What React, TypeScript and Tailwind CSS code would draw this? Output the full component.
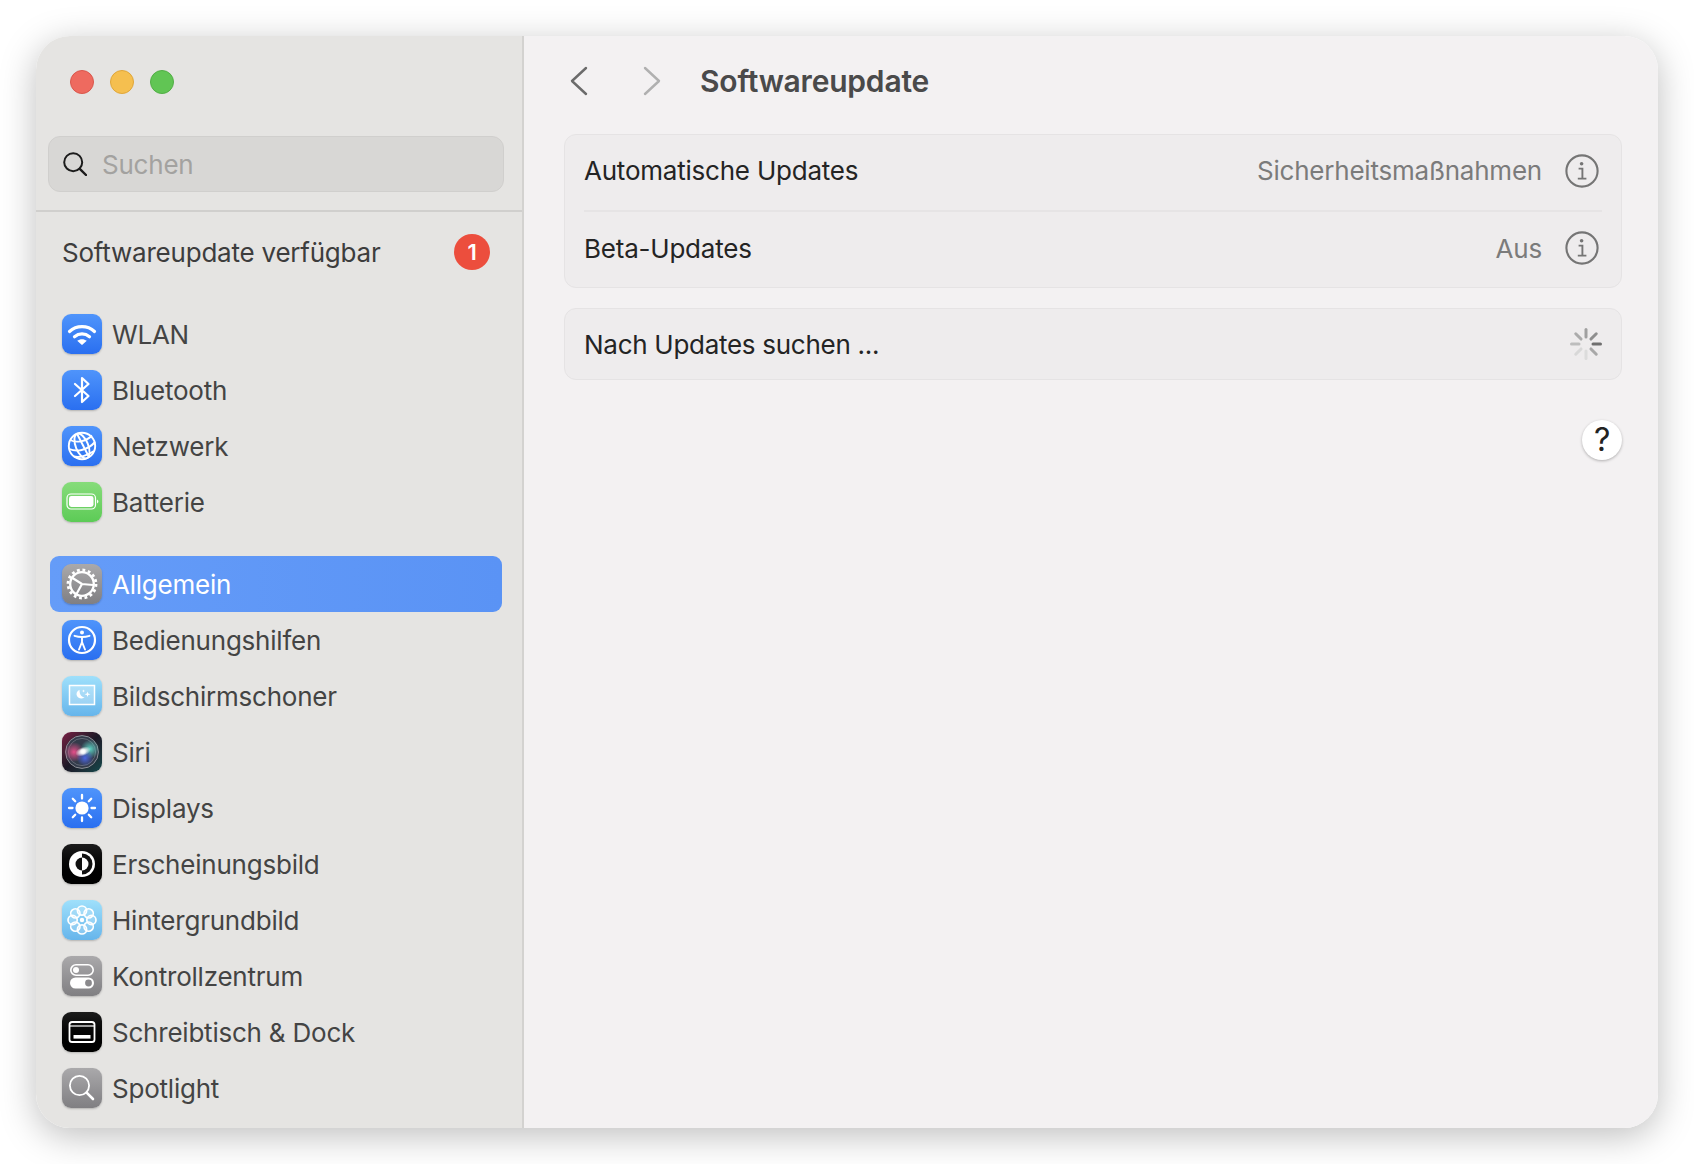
import React from 'react';

const Tile = ({ className, children }: { className: string; children: React.ReactNode }) => (
    <div className={`w-10 h-10 shrink-0 rounded-[9px] shadow-[0_1px_2px_rgba(0,0,0,0.22)] ${className}`}>
        <svg viewBox="0 0 40 40" className="w-10 h-10">{children}</svg>
    </div>
);

const blue = 'bg-gradient-to-b from-[#4f94fb] to-[#2a6ff0]';
const sky = 'bg-gradient-to-b from-[#9fe0fb] to-[#66b5eb]';
const grey = 'bg-gradient-to-b from-[#aaa9ab] to-[#807f82]';

const WlanIcon = () => (
    <Tile className={blue}>
        <g fill="none" stroke="#fff" strokeWidth="3.2" strokeLinecap="round">
            <path d="M7.5 17.5C14.5 11 25.5 11 32.5 17.5" />
            <path d="M12.5 22.8C17 19 23 19 27.5 22.8" />
        </g>
        <path d="M15.2 26.8C18 24.7 22 24.7 24.8 26.8L20.6 30.6C20.2 31 19.8 31 19.4 30.6Z" fill="#fff" />
    </Tile>
);

const BluetoothIcon = () => (
    <Tile className={blue}>
        <path d="M13 14L26.5 26L20 32V8L26.5 14L13 26" fill="none" stroke="#fff" strokeWidth="2.2" strokeLinecap="round" strokeLinejoin="round" />
    </Tile>
);

const GlobeIcon = () => (
    <Tile className={blue}>
        <g fill="none" stroke="#fff" strokeWidth="1.9">
            <circle cx="20" cy="20" r="13.2" />
            <ellipse cx="20" cy="20" rx="6.2" ry="13.2" transform="rotate(-22 20 20)" />
            <path d="M8.5 14C13 17 24 16 30 9.5" />
            <path d="M7.3 23C14 26 25 25 33 16" />
            <path d="M12 30.5C17 32 25 30 32 25" />
            <path d="M15 7.8L27 31" />
        </g>
    </Tile>
);

const BatteryIcon = () => (
    <Tile className="bg-gradient-to-b from-[#86dc7a] to-[#5ccb56]">
        <rect x="5" y="12" width="28.5" height="15" rx="4" fill="none" stroke="#fff" strokeWidth="1.2" />
        <rect x="7" y="14" width="24.5" height="11" rx="2.4" fill="#fff" />
        <path d="M35 17.5C36 18 36.4 18.8 36.4 19.5C36.4 20.2 36 21 35 21.5Z" fill="#fff" />
    </Tile>
);

const GearIcon = () => (
    <Tile className={grey}>
        <g fill="none" stroke="#fff">
            <circle cx="20" cy="20" r="14" strokeWidth="2.8" strokeDasharray="2.8 2.7" />
            <circle cx="20" cy="20" r="11.8" strokeWidth="2.3" />
            <path d="M20 20L10.5 14M20 20L31 21M20 20L14.5 30" strokeWidth="2.2" />
        </g>
    </Tile>
);

const AccessIcon = () => (
    <Tile className={blue}>
        <circle cx="20" cy="20" r="13" fill="none" stroke="#fff" strokeWidth="2.2" />
        <circle cx="20" cy="12.6" r="2" fill="#fff" />
        <path d="M12.5 15.8C17 17.2 23 17.2 27.5 15.8M20 17V22M20 22L17 29.5M20 22L23 29.5" fill="none" stroke="#fff" strokeWidth="1.9" strokeLinecap="round" />
    </Tile>
);

const SaverIcon = () => (
    <Tile className={sky}>
        <rect x="7.5" y="9.5" width="25" height="19" fill="#ffffff" fillOpacity="0.28" stroke="#fff" strokeWidth="1.5" />
        <path d="M17.5 13.8C14.8 15 13.8 17.6 15 20C16.2 22.4 19.6 23.2 22.6 21.4C20 21.2 17.4 19.2 17.5 13.8Z" fill="#fff" />
        <path d="M25.5 15.5L26.2 17.6L28.5 18.3L26.2 19L25.5 21.1L24.8 19L22.5 18.3L24.8 17.6Z" fill="#fff" />
        <path d="M21.5 13.5L21.9 14.6L23 15L21.9 15.4L21.5 16.5L21.1 15.4L20 15L21.1 14.6Z" fill="#fff" />
    </Tile>
);

const SiriIcon = () => (
    <div className="w-10 h-10 shrink-0 rounded-[9px] shadow-[0_1px_2px_rgba(0,0,0,0.22)] bg-gradient-to-br from-[#7a1c44] via-[#1b1826] to-[#0f4a4c]">
        <svg viewBox="0 0 40 40" className="w-10 h-10">
            <defs>
                <radialGradient id="siriPink" cx="0.5" cy="0.5" r="0.5">
                    <stop offset="0" stopColor="#ee4f8c" stopOpacity="0.95" />
                    <stop offset="1" stopColor="#ee4f8c" stopOpacity="0" />
                </radialGradient>
                <radialGradient id="siriTeal" cx="0.5" cy="0.5" r="0.5">
                    <stop offset="0" stopColor="#5fd8c8" stopOpacity="0.95" />
                    <stop offset="1" stopColor="#5fd8c8" stopOpacity="0" />
                </radialGradient>
                <radialGradient id="siriBlue" cx="0.5" cy="0.5" r="0.5">
                    <stop offset="0" stopColor="#4d68e8" stopOpacity="0.95" />
                    <stop offset="1" stopColor="#4d68e8" stopOpacity="0" />
                </radialGradient>
                <radialGradient id="siriWhite" cx="0.5" cy="0.5" r="0.5">
                    <stop offset="0" stopColor="#fff" />
                    <stop offset="0.5" stopColor="#fff" stopOpacity="0.7" />
                    <stop offset="1" stopColor="#fff" stopOpacity="0" />
                </radialGradient>
            </defs>
            <circle cx="20" cy="20" r="16.4" fill="#333b4a" stroke="#8d9098" strokeWidth="1" />
            <circle cx="20" cy="20" r="13.6" fill="none" stroke="#6d7480" strokeWidth="0.8" />
            <circle cx="12" cy="20" r="10" fill="url(#siriPink)" />
            <circle cx="28" cy="17" r="9.5" fill="url(#siriTeal)" />
            <circle cx="23" cy="26" r="8.5" fill="url(#siriBlue)" />
            <ellipse cx="21" cy="19.5" rx="8" ry="4.5" fill="url(#siriWhite)" transform="rotate(-20 21 19.5)" />
            <circle cx="21" cy="19.5" r="3.6" fill="url(#siriWhite)" />
        </svg>
    </div>
);

const SunIcon = () => (
    <Tile className={blue}>
        <circle cx="20" cy="20" r="6.6" fill="#fff" />
        <path d="M20 7V10.5M20 29.5V33M7 20H10.5M29.5 20H33M10.8 10.8L13.2 13.2M26.8 26.8L29.2 29.2M10.8 29.2L13.2 26.8M26.8 13.2L29.2 10.8" stroke="#fff" strokeWidth="2.3" strokeLinecap="round" />
    </Tile>
);

const AppearanceIcon = () => (
    <Tile className="bg-gradient-to-b from-[#1c1c1c] to-[#000000]">
        <circle cx="20" cy="20" r="13" fill="#fff" />
        <path d="M20 9.5A10.5 10.5 0 0 1 20 30.5Z" fill="#111" />
        <path d="M20 13.5A6.5 6.5 0 0 1 20 26.5Z" fill="#fff" />
        <path d="M20 13.5A6.5 6.5 0 0 0 20 26.5Z" fill="#111" />
    </Tile>
);

const FlowerIcon = () => (
    <Tile className={sky}>
        <g fill="#ffffff" fillOpacity="0.18" stroke="#fff" strokeWidth="1.7">
            {[0, 45, 90, 135, 180, 225, 270, 315].map((a) => (
                <circle key={a} cx="20" cy="10.6" r="4.6" transform={`rotate(${a} 20 20)`} />
            ))}
        </g>
        <circle cx="20" cy="20" r="2.2" fill="#fff" />
    </Tile>
);

const ControlIcon = () => (
    <Tile className={grey}>
        <rect x="8.8" y="8.8" width="22.4" height="10.4" rx="5.2" fill="none" stroke="#fff" strokeWidth="1.6" />
        <circle cx="14" cy="14" r="3" fill="#fff" />
        <rect x="8" y="21.5" width="24" height="11" rx="5.5" fill="#fff" />
        <circle cx="26.5" cy="27" r="3.4" fill="#8a898c" />
    </Tile>
);

const DockIcon = () => (
    <Tile className="bg-gradient-to-b from-[#1c1c1c] to-[#000000]">
        <rect x="7.5" y="10" width="25" height="20" rx="2.6" fill="none" stroke="#fff" strokeWidth="1.8" />
        <path d="M8 14H32" stroke="#fff" strokeWidth="1.2" />
        <rect x="11.5" y="23" width="17" height="3.6" fill="#fff" />
    </Tile>
);

const SpotlightIcon = () => (
    <Tile className={grey}>
        <circle cx="17.5" cy="17.5" r="9.6" fill="none" stroke="#fff" strokeWidth="1.8" />
        <path d="M24.6 24.6L31 31" stroke="#fff" strokeWidth="2.6" strokeLinecap="round" />
    </Tile>
);

const InfoIcon = () => (
    <svg viewBox="0 0 34 34" className="w-[34px] h-[34px] shrink-0 mr-[3px] mb-[3px]">
        <circle cx="17" cy="17" r="15.6" fill="none" stroke="#757575" strokeWidth="2.1" />
        <circle cx="16.6" cy="9.8" r="1.8" fill="#757575" />
        <path d="M13.6 14.6H17.4V24.4M12.8 24.6H21.4" fill="none" stroke="#757575" strokeWidth="1.9" />
    </svg>
);

const spokes = [
    { a: 0, c: '#a0a0a0' },
    { a: 45, c: '#8e8e8e' },
    { a: 90, c: '#6f6f6f' },
    { a: 135, c: '#a8a8a8' },
    { a: 180, c: '#dcdcdc' },
    { a: 225, c: '#d8d8d8' },
    { a: 270, c: '#bdbdbd' },
    { a: 315, c: '#ababab' },
];

const Spinner = () => (
    <svg viewBox="0 0 32 32" className="w-8 h-8 shrink-0">
        {spokes.map((s) => (
            <path key={s.a} d="M16 1.5V9" stroke={s.c} strokeWidth="3" strokeLinecap="round" transform={`rotate(${s.a} 16 16)`} />
        ))}
    </svg>
);

const group1 = [
    { icon: <WlanIcon />, label: 'WLAN' },
    { icon: <BluetoothIcon />, label: 'Bluetooth' },
    { icon: <GlobeIcon />, label: 'Netzwerk' },
    { icon: <BatteryIcon />, label: 'Batterie' },
];

const group2 = [
    { icon: <GearIcon />, label: 'Allgemein', active: true },
    { icon: <AccessIcon />, label: 'Bedienungshilfen' },
    { icon: <SaverIcon />, label: 'Bildschirmschoner' },
    { icon: <SiriIcon />, label: 'Siri' },
    { icon: <SunIcon />, label: 'Displays' },
    { icon: <AppearanceIcon />, label: 'Erscheinungsbild' },
    { icon: <FlowerIcon />, label: 'Hintergrundbild' },
    { icon: <ControlIcon />, label: 'Kontrollzentrum' },
    { icon: <DockIcon />, label: 'Schreibtisch & Dock' },
    { icon: <SpotlightIcon />, label: 'Spotlight' },
];

const NavRow = ({ icon, label, active }: { icon: React.ReactNode; label: string; active?: boolean }) => (
    <div className={`h-14 flex items-center gap-[10px] pl-3 rounded-[9px] ${active ? 'bg-gradient-to-r from-[#659cf8] to-[#5a93f5] text-white' : 'text-[#444444]'}`}>
        {icon}
        <span className="text-[26px] leading-none pt-0.5">{label}</span>
    </div>
);

const App = () => {
    return (
        <div className="w-[1694px] h-[1164px] bg-white pt-9 pl-9 font-[Inter,sans-serif] tracking-[-0.22px] overflow-hidden">
            <div className="w-[1622px] h-[1092px] flex rounded-[34px] overflow-hidden shadow-[0_8px_36px_rgba(0,0,0,0.26)]">
                <aside className="w-[488px] shrink-0 bg-[#e5e4e2] border-r-2 border-[#d3d2d0] overflow-hidden">
                    <div className="flex gap-4 pl-[34px] pt-[34px]">
                        <span className="w-6 h-6 rounded-full bg-[#ee6a5f] border border-[#d9574c]" />
                        <span className="w-6 h-6 rounded-full bg-[#f5bf4f] border border-[#dfa63a]" />
                        <span className="w-6 h-6 rounded-full bg-[#61c554] border border-[#52ae46]" />
                    </div>
                    <div className="mx-3 mt-[42px] h-14 w-[456px] flex items-center gap-[15px] pl-[14px] rounded-xl bg-[#d8d7d5] border border-[#d0cfcd]">
                        <svg viewBox="0 0 24 24" className="w-6 h-6 shrink-0" fill="none" stroke="#1c1c1c">
                            <circle cx="10.2" cy="10.2" r="9" strokeWidth="2" />
                            <path d="M16.8 16.8L23 23" strokeWidth="2.4" strokeLinecap="round" />
                        </svg>
                        <span className="text-[26px] leading-none pt-0.5 text-[#a3a2a0]">Suchen</span>
                    </div>
                    <div className="mt-[18px] h-0.5 bg-[#d0cfcd]" />
                    <div className="h-20 flex items-center justify-between pl-[26px] pr-8">
                        <span className="text-[26px] leading-none pt-0.5 text-[#3d3d3d]">Softwareupdate verfügbar</span>
                        <span className="w-9 h-9 rounded-full bg-[#ec4e3d] text-white text-[22px] font-semibold flex items-center justify-center">1</span>
                    </div>
                    <div className="mt-[14px] flex flex-col pl-[14px] pr-5">
                        {group1.map((item) => (
                            <NavRow key={item.label} icon={item.icon} label={item.label} />
                        ))}
                    </div>
                    <div className="mt-[26px] flex flex-col pl-[14px] pr-5">
                        {group2.map((item) => (
                            <NavRow key={item.label} icon={item.icon} label={item.label} active={item.active} />
                        ))}
                    </div>
                </aside>
                <main className="flex-1 bg-[#f3f1f2] pl-[40px] pr-9">
                    <div className="h-[90px] mb-2 flex items-center">
                        <svg viewBox="0 0 18 30" className="w-[18px] h-[30px] ml-[6px]" fill="none" stroke="#6b6b6b" strokeWidth="2.4" strokeLinecap="round" strokeLinejoin="round">
                            <path d="M16 2L2 15L16 28" />
                        </svg>
                        <svg viewBox="0 0 18 30" className="w-[18px] h-[30px] ml-[55px]" fill="none" stroke="#b0b0b0" strokeWidth="2.4" strokeLinecap="round" strokeLinejoin="round">
                            <path d="M2 2L16 15L2 28" />
                        </svg>
                        <h1 className="ml-[39px] text-[30px] font-semibold leading-none tracking-[-0.2px] text-[#4a4a4a]">Softwareupdate</h1>
                    </div>
                    <section className="bg-[#eeeced] border border-[#e5e3e4] rounded-xl px-[19px]">
                        <div className="h-[77px] flex items-center justify-between border-b-2 border-[#e6e4e5]">
                            <span className="text-[26px] leading-none pb-1 text-[#242424]">Automatische Updates</span>
                            <div className="flex items-center gap-[23px]">
                                <span className="text-[26px] leading-none pb-1 text-[#7b7b7b]">Sicherheitsmaßnahmen</span>
                                <InfoIcon />
                            </div>
                        </div>
                        <div className="h-[75px] flex items-center justify-between">
                            <span className="text-[26px] leading-none pb-0.5 text-[#242424]">Beta-Updates</span>
                            <div className="flex items-center gap-[23px]">
                                <span className="text-[26px] leading-none pb-0.5 text-[#7b7b7b]">Aus</span>
                                <InfoIcon />
                            </div>
                        </div>
                    </section>
                    <section className="mt-5 h-[72px] bg-[#eeeced] border border-[#e5e3e4] rounded-xl pl-[19px] pr-[19px] flex items-center justify-between">
                        <span className="text-[26px] leading-none pt-0.5 tracking-[-0.28px] text-[#242424]">Nach Updates suchen ...</span>
                        <Spinner />
                    </section>
                    <div className="mt-10 flex justify-end">
                        <div className="w-10 h-10 rounded-full bg-white shadow-[0_1px_3px_rgba(0,0,0,0.28)] flex items-center justify-center text-[32px] font-normal leading-none text-[#222222]">?</div>
                    </div>
                </main>
            </div>
        </div>
    );
};

export default App;
